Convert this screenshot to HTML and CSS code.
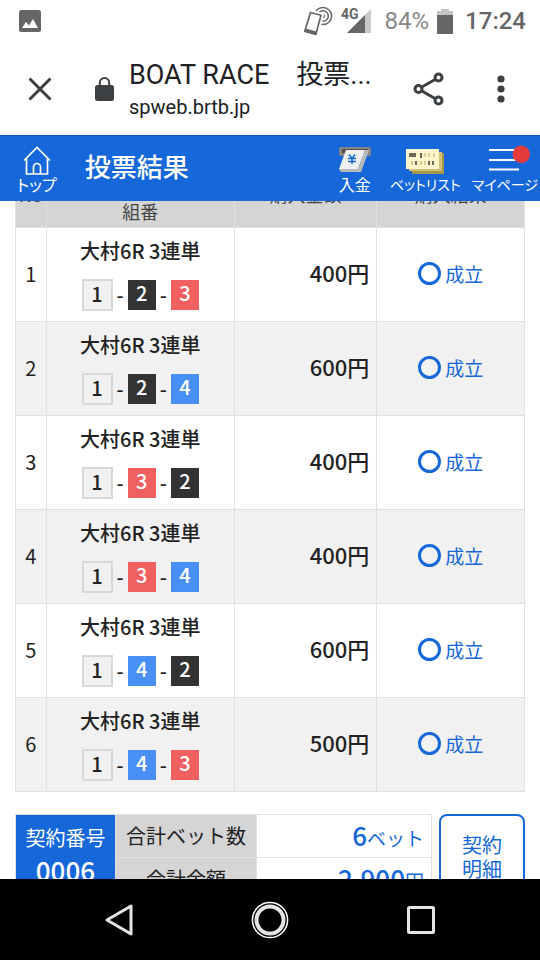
FILE: index.html
```html
<!DOCTYPE html>
<html lang="ja">
<head>
<meta charset="utf-8">
<meta name="viewport" content="width=device-width, initial-scale=1">
<title>投票結果</title>
<link rel="stylesheet" href="styles.css">
</head>
<body>
<div class="status">
  <svg class="status-photo" width="22" height="22" viewBox="0 0 22 22"><rect width="22" height="22" rx="2.5" fill="#666"/><path d="M3 18l4-6 3 3.500 4-6.500 5 9z" fill="#fff"/></svg>
  <svg width="30" height="30" viewBox="0 0 30 30" fill="none" stroke="#666"><circle cx="20" cy="10" r="8.600" stroke-width="1.500"/><circle cx="20" cy="10" r="5.300" stroke-width="1.500"/><circle cx="20" cy="10" r="2.200" fill="#666" stroke="none"/><path d="M7 5.500L19 9 13.500 29 1 25.500z" fill="#fff" stroke="#fff" stroke-width="4"/><path d="M7.500 6.500L18 9.300 12.800 28.500 1.800 25.200z" fill="#fff" stroke-width="1.700" stroke-linejoin="round"/><path d="M2.500 23l11 3-.7 2.500-11-3z" fill="#666"/></svg>
  <span class="network">4G</span>
  <svg class="signal" width="24" height="24" viewBox="0 0 24 24"><path d="M24 0v24H0z" fill="#c8c8c8"/><path d="M18 6v18H0z" fill="#666"/></svg>
  <span class="percent">84%</span>
  <svg class="battery" width="16" height="25" viewBox="0 0 16 25"><path d="M4 0h8v2h4v5H0V2h4z" fill="#c4c4c4"/><path d="M0 6h16v19H0z" fill="#666"/></svg>
  <span class="clock">17:24</span>
</div>

<div class="browser">
  <button class="plain close" aria-label="閉じる"><svg width="24" height="24" viewBox="0 0 24 24"><path d="M1.500 1.500l21 21M22.500 1.500l-21 21" stroke="#3c4043" stroke-width="3"/></svg></button>
  <svg class="lock" width="19" height="24" viewBox="0 0 19 24"><rect y="8" width="19" height="16" rx="2.500" fill="#3c4043"/><path d="M4.800 9V5.800a4.700 4.700 0 0 1 9.400 0V9" fill="none" stroke="#3c4043" stroke-width="2"/></svg>
  <div class="site">
    <div class="site-title">BOAT RACE　投票...</div>
    <div class="site-host">spweb.brtb.jp</div>
  </div>
  <button class="plain share" aria-label="共有"><svg width="32" height="34" viewBox="0 0 32 34" fill="none" stroke="#3c4043" stroke-width="3"><path d="M8 15.500L22 7.500M8 18.500l14 8"/><circle cx="5.500" cy="17" r="3.500"/><circle cx="25.500" cy="5.500" r="3.500"/><circle cx="25.500" cy="28.500" r="3.500"/></svg></button>
  <button class="plain" aria-label="メニュー"><svg width="8" height="28" viewBox="0 0 8 28" fill="#3c4043"><circle cx="4" cy="4" r="3.600"/><circle cx="4" cy="14" r="3.600"/><circle cx="4" cy="24" r="3.600"/></svg></button>
</div>

<header class="appbar">
  <a class="tool home" href="#"><svg width="28" height="30" viewBox="0 0 28 30" fill="none" stroke="#fff" stroke-width="1.700"><path d="M1 15.500L14 2.500l13 13M3.500 13v16h21V13M10.500 29v-7a3.500 3.500 0 0 1 7 0v7"/></svg><span>トップ</span></a>
  <h1>投票結果</h1>
  <a class="tool" href="#"><svg width="34" height="30" viewBox="0 0 34 30"><rect x="1" y="2" width="32" height="9" rx="2" fill="#858585"/><path d="M4 4h26v4H4z" fill="#4f4f4f"/><path d="M8 5h19l-7 19H1z" fill="#f0f0f0"/><path d="M27 5h4l-8 22H3l-2-3h19z" fill="#b9b9b9"/><path d="M11 9.500l3 4 3-4M14 13v6M10 13.500h8M10 16.500h8" fill="none" stroke="#1667da" stroke-width="1.500"/></svg><span>入金</span></a>
  <a class="tool bets" href="#"><svg width="38" height="30" viewBox="0 0 38 30"><path d="M6 8h32v21H6z" fill="#a8964a"/><path d="M3 7h33v19H3z" fill="#d3bf76"/><path d="M0 4h33v20H0z" fill="#fff6cc"/><path d="M3 8h7v4H3zM14 8h2v5h-2zM9 16h2v4H9zM22 16h2v4h-2zM26 16h2v4h-2z" fill="#6b675c"/><path d="M18 8h2v4h-2zM22 8h2v4h-2zM27 8h2v4h-2zM5 16h2v4H5zM14 16h2v4h-2zM18 16h2v4h-2z" fill="#d9cc94"/></svg><span class="small">ベットリスト</span></a>
  <a class="tool" href="#"><svg width="50" height="30" viewBox="0 0 50 30"><path d="M9 5h30M9 15h30M9 24.500h30" stroke="#fff" stroke-width="2"/><circle cx="41.300" cy="9.300" r="8.700" fill="#e53b3c"/></svg><span class="small">マイページ</span></a>
</header>

<main>
  <table class="results">
    <colgroup><col class="c-no"><col class="c-race"><col class="c-price"><col class="c-state"></colgroup>
    <thead><tr><th>No</th><th class="combo">組番</th><th>購入金額</th><th>購入結果</th></tr></thead>
    <tbody>
      <tr><td>1</td><td><p class="race">大村6R 3連単</p><div class="chips"><b class="n1">1</b>-<b class="n2">2</b>-<b class="n3">3</b></div></td><td class="price">400円</td><td><div class="state"><i></i>成立</div></td></tr>
      <tr><td>2</td><td><p class="race">大村6R 3連単</p><div class="chips"><b class="n1">1</b>-<b class="n2">2</b>-<b class="n4">4</b></div></td><td class="price">600円</td><td><div class="state"><i></i>成立</div></td></tr>
      <tr><td>3</td><td><p class="race">大村6R 3連単</p><div class="chips"><b class="n1">1</b>-<b class="n3">3</b>-<b class="n2">2</b></div></td><td class="price">400円</td><td><div class="state"><i></i>成立</div></td></tr>
      <tr><td>4</td><td><p class="race">大村6R 3連単</p><div class="chips"><b class="n1">1</b>-<b class="n3">3</b>-<b class="n4">4</b></div></td><td class="price">400円</td><td><div class="state"><i></i>成立</div></td></tr>
      <tr><td>5</td><td><p class="race">大村6R 3連単</p><div class="chips"><b class="n1">1</b>-<b class="n4">4</b>-<b class="n2">2</b></div></td><td class="price">600円</td><td><div class="state"><i></i>成立</div></td></tr>
      <tr><td>6</td><td><p class="race">大村6R 3連単</p><div class="chips"><b class="n1">1</b>-<b class="n4">4</b>-<b class="n3">3</b></div></td><td class="price">500円</td><td><div class="state"><i></i>成立</div></td></tr>
    </tbody>
  </table>
  <section class="summary">
    <table class="totals">
      <colgroup><col class="t-contract"><col class="t-label"><col class="t-value"></colgroup>
      <tr><th class="contract" rowspan="2">契約番号<strong>0006</strong></th><th>合計ベット数</th><td><strong>6</strong>ベット</td></tr>
      <tr><th>合計金額</th><td><strong>2,900</strong>円</td></tr>
    </table>
    <button class="detail">契約<br>明細</button>
  </section>
</main>

<nav class="system">
  <button class="plain" aria-label="戻る"><svg width="30" height="34" viewBox="0 0 30 34"><path d="M27 3v28L3 17z" fill="none" stroke="#e4e4e4" stroke-width="3" stroke-linejoin="round"/></svg></button>
  <button class="plain" aria-label="ホーム"><svg width="38" height="38" viewBox="0 0 38 38" fill="none"><circle cx="19" cy="19" r="17.600" stroke="#fff" stroke-width="1.500"/><circle cx="19" cy="19" r="13.500" stroke="#e4e4e4" stroke-width="4"/></svg></button>
  <button class="plain" aria-label="履歴"><svg width="30" height="30" viewBox="0 0 30 30"><rect x="2.500" y="2.500" width="25" height="25" rx="1" fill="none" stroke="#e4e4e4" stroke-width="3"/></svg></button>
</nav>
</body>
</html>
```
FILE: styles.css
```css
* { box-sizing: border-box; }
body {
  margin: 0;
  height: 100vh;
  display: flex;
  flex-direction: column;
  overflow: hidden;
  background: #fff;
  color: #222;
  font-family: "Noto Sans CJK JP", sans-serif;
  font-size: 20px;
}
svg { display: block; flex: none; }
button { font: inherit; }
.plain { padding: 0; border: 0; background: none; }

.status {
  flex: none;
  display: flex;
  align-items: center;
  height: 42px;
  padding: 0 14px 0 19px;
  font-family: Roboto, sans-serif;
  font-size: 24px;
  font-weight: 500;
  color: #666;
}
.status-photo { margin-right: auto; }
.network { align-self: flex-start; margin: 6px 0 0 8px; font-size: 14px; line-height: 16px; font-weight: 700; }
.signal { margin-left: -12px; }
.percent { margin-left: 14px; font-weight: 400; color: #888; }
.battery { margin: 0 12px 0 8px; }

.browser {
  flex: none;
  display: flex;
  align-items: center;
  height: 93px;
  padding: 0 35px 0 28px;
  font-family: Roboto, "Noto Sans CJK JP", sans-serif;
}
.lock { margin-left: 43px; }
.site { margin-left: 15px; flex: 1; white-space: nowrap; color: #202124; }
.site-title { font-size: 27px; line-height: 36px; }
.site-host { font-size: 20px; line-height: 28px; }
.share { margin-right: 52px; }

.appbar {
  flex: none;
  display: flex;
  height: 66px;
  padding: 0 2px 0 17px;
  border-top: 1px solid #1659b8;
  background: #1667da;
  color: #fff;
}
.appbar h1 { margin: 0 auto 0 28px; font-size: 26px; line-height: 60px; font-weight: 500; }
.tool {
  display: flex;
  flex-direction: column;
  align-items: center;
  padding-top: 9px;
  color: #fff;
  text-decoration: none;
  font-size: 16px;
  line-height: 18px;
  font-feature-settings: "palt";
  white-space: nowrap;
}
.tool .small { font-size: 14px; }
.bets { margin: 0 11px 0 18px; }

main { flex: 1; min-height: 0; overflow: hidden; padding: 0 15px; }
table { border-collapse: collapse; table-layout: fixed; width: 100%; }
th, td { padding: 0; border: 1px solid #e0e0e0; text-align: center; }
th { background: #d5d5d5; font-weight: 400; }

.results { margin-top: -38px; }
.c-no { width: 6%; }
.c-race { width: 37%; }
.c-price { width: 28%; }
.c-state { width: 29%; }
.results th { height: 64px; padding-bottom: 4px; font-size: 18px; line-height: 24px; color: #444; }
.results .combo { vertical-align: bottom; }
.results td { height: 94px; padding-bottom: 3px; }
.results tbody tr:nth-child(even) { background: #f1f1f1; }
.race { margin: 2px 0 14px; font-weight: 500; line-height: 28px; }
.chips { display: flex; justify-content: center; align-items: center; gap: 4px; font-weight: 500; line-height: 26px; }
.chips b { width: 28px; height: 30px; font-weight: 500; color: #fff; }
.chips .n1 { width: 31px; height: 32px; border: 2px solid #d8d8d8; background: #f1f1f1; color: #222; }
.n2 { background: #333; }
.n3 { background: #f16061; }
.n4 { background: #488ff6; }
.results .price { padding-right: 7px; padding-bottom: 6px; text-align: right; font-size: 22px; font-weight: 500; }
.state { display: flex; align-items: center; justify-content: center; gap: 4px; font-size: 19px; color: #1667da; }
.state i { width: 23px; height: 23px; border: 3px solid #1667da; border-radius: 50%; }

.summary { display: flex; align-items: flex-start; gap: 7px; margin-top: 22px; }
.totals { flex: 1; }
.t-contract { width: 24%; }
.t-label { width: 34%; }
.t-value { width: 42%; }
.totals th, .totals td { height: 43px; line-height: 28px; }
.totals .contract { padding-bottom: 8px; background: #1667da; color: #fff; line-height: 32px; }
.contract strong { display: block; }
.totals strong { font-size: 26px; font-weight: 500; }
.totals td { padding-right: 7px; text-align: right; font-size: 19px; color: #1667da; }
.detail {
  width: 86px;
  height: 86px;
  border: 2px solid #1667da;
  border-radius: 8px;
  background: #fff;
  color: #1667da;
  line-height: 24px;
}

.system {
  flex: none;
  display: flex;
  justify-content: center;
  align-items: center;
  gap: 117px;
  height: 81px;
  background: #000;
}
```
